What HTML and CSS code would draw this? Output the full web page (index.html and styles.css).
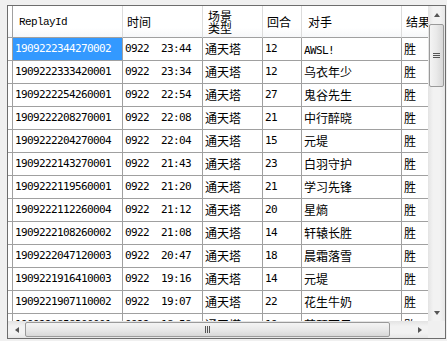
FILE: index.html
```html
<!DOCTYPE html>
<html lang="zh-CN">
<head>
	<meta charset="UTF-8">
	<title>战斗回放</title>
	<link rel="stylesheet" href="styles.css">
</head>
<body>
	<div class="frame">
		<div class="viewport">
			<div class="row head">
				<div class="cell rh"></div>
				<div class="cell id-h">ReplayId</div>
				<div class="cell">时间</div>
				<div class="cell two">场景<br>类型</div>
				<div class="cell">回合</div>
				<div class="cell pad6">对手</div>
				<div class="cell">结果</div>
			</div>
			<div class="row">
				<div class="cell rh"></div>
				<div class="cell num sel">1909222344270002</div>
				<div class="cell num">0922&nbsp;&nbsp;23:44</div>
				<div class="cell">通天塔</div>
				<div class="cell num">12</div>
				<div class="cell"><span class="num">AWSL!</span></div>
				<div class="cell">胜</div>
			</div>
			<div class="row">
				<div class="cell rh"></div>
				<div class="cell num">1909222333420001</div>
				<div class="cell num">0922&nbsp;&nbsp;23:34</div>
				<div class="cell">通天塔</div>
				<div class="cell num">12</div>
				<div class="cell">乌衣年少</div>
				<div class="cell">胜</div>
			</div>
			<div class="row">
				<div class="cell rh"></div>
				<div class="cell num">1909222254260001</div>
				<div class="cell num">0922&nbsp;&nbsp;22:54</div>
				<div class="cell">通天塔</div>
				<div class="cell num">27</div>
				<div class="cell">鬼谷先生</div>
				<div class="cell">胜</div>
			</div>
			<div class="row">
				<div class="cell rh"></div>
				<div class="cell num">1909222208270001</div>
				<div class="cell num">0922&nbsp;&nbsp;22:08</div>
				<div class="cell">通天塔</div>
				<div class="cell num">21</div>
				<div class="cell">中行醉晓</div>
				<div class="cell">胜</div>
			</div>
			<div class="row">
				<div class="cell rh"></div>
				<div class="cell num">1909222204270004</div>
				<div class="cell num">0922&nbsp;&nbsp;22:04</div>
				<div class="cell">通天塔</div>
				<div class="cell num">15</div>
				<div class="cell">元堤</div>
				<div class="cell">胜</div>
			</div>
			<div class="row">
				<div class="cell rh"></div>
				<div class="cell num">1909222143270001</div>
				<div class="cell num">0922&nbsp;&nbsp;21:43</div>
				<div class="cell">通天塔</div>
				<div class="cell num">23</div>
				<div class="cell">白羽守护</div>
				<div class="cell">胜</div>
			</div>
			<div class="row">
				<div class="cell rh"></div>
				<div class="cell num">1909222119560001</div>
				<div class="cell num">0922&nbsp;&nbsp;21:20</div>
				<div class="cell">通天塔</div>
				<div class="cell num">21</div>
				<div class="cell">学习先锋</div>
				<div class="cell">胜</div>
			</div>
			<div class="row">
				<div class="cell rh"></div>
				<div class="cell num">1909222112260004</div>
				<div class="cell num">0922&nbsp;&nbsp;21:12</div>
				<div class="cell">通天塔</div>
				<div class="cell num">20</div>
				<div class="cell">星熵</div>
				<div class="cell">胜</div>
			</div>
			<div class="row">
				<div class="cell rh"></div>
				<div class="cell num">1909222108260002</div>
				<div class="cell num">0922&nbsp;&nbsp;21:08</div>
				<div class="cell">通天塔</div>
				<div class="cell num">14</div>
				<div class="cell">轩辕长胜</div>
				<div class="cell">胜</div>
			</div>
			<div class="row">
				<div class="cell rh"></div>
				<div class="cell num">1909222047120003</div>
				<div class="cell num">0922&nbsp;&nbsp;20:47</div>
				<div class="cell">通天塔</div>
				<div class="cell num">18</div>
				<div class="cell">晨霜落雪</div>
				<div class="cell">胜</div>
			</div>
			<div class="row">
				<div class="cell rh"></div>
				<div class="cell num">1909221916410003</div>
				<div class="cell num">0922&nbsp;&nbsp;19:16</div>
				<div class="cell">通天塔</div>
				<div class="cell num">14</div>
				<div class="cell">元堤</div>
				<div class="cell">胜</div>
			</div>
			<div class="row">
				<div class="cell rh"></div>
				<div class="cell num">1909221907110002</div>
				<div class="cell num">0922&nbsp;&nbsp;19:07</div>
				<div class="cell">通天塔</div>
				<div class="cell num">22</div>
				<div class="cell">花生牛奶</div>
				<div class="cell">胜</div>
			</div>
			<div class="row">
				<div class="cell rh"></div>
				<div class="cell num">1909221858300001</div>
				<div class="cell num">0922&nbsp;&nbsp;18:58</div>
				<div class="cell">通天塔</div>
				<div class="cell num">19</div>
				<div class="cell">萧瑟西风</div>
				<div class="cell">败</div>
			</div>
		</div>
		<!-- 竖向滚动条 -->
		<div class="vscroll">
			<div class="btn"><i class="arr up"></i></div>
			<div class="vthumb"><i class="grip-h"></i></div>
			<div class="track"></div>
			<div class="btn"><i class="arr down"></i></div>
		</div>
		<!-- 横向滚动条 -->
		<div class="hscroll">
			<div class="btn"><i class="arr left"></i></div>
			<div class="hthumb"><i class="grip-v"></i></div>
			<div class="track"></div>
			<div class="btn"><i class="arr right"></i></div>
		</div>
		<div class="corner"></div>
	</div>
</body>
</html>
```

FILE: styles.css
```css
*{margin:0;padding:0;box-sizing:border-box;}
body{
	background:#f0f0f0;
	font-family:"Noto Sans CJK SC",sans-serif;
	font-size:12px;
	color:#000;
}
.frame{
	margin:5px 0 0 7px;
	width:439px;
	height:334px;
	border:1px solid #6d6d6d;
	background:#fff;
	display:grid;
	grid-template-columns:1fr 17px;
	grid-template-rows:1fr 17px;
}
.viewport{
	overflow:hidden;
}
.row{
	display:grid;
	grid-template-columns:5px 110px 80px 60px 39px 100px 60px;
	height:23px;
	width:max-content;
}
.cell{
	border-right:1px solid #a0a0a0;
	border-bottom:1px solid #a0a0a0;
	padding-left:2px;
	line-height:22px;
	white-space:nowrap;
	overflow:hidden;
}
.num{
	font-family:"DejaVu Sans Mono",monospace;
	font-size:11px;
	letter-spacing:-0.62px;
}
.sel{
	background:#3399ff;
	color:#fff;
}
.rh{
	padding:0;
}

/* 表头 */
.head{
	height:32px;
}
.head .cell{
	background:linear-gradient(#fff,#fff 70%,#f6f7f9);
	border-right-color:#dcdcdc;
	border-bottom-color:#a0a0a0;
	padding-left:4px;
	display:flex;
	align-items:center;
	line-height:14px;
}
.head .rh{
	border-right-color:#a0a0a0;
	padding:0;
}
.head .id-h{
	font-family:"Liberation Mono",monospace;
	font-size:11px;
	letter-spacing:-0.6px;
	padding-left:6px;
}
.head .two{
	line-height:12px;
	padding-left:5px;
}
.head .pad6{
	padding-left:6px;
}

/* 滚动条 */
.vscroll,.hscroll{
	display:flex;
	background:#eaeaea;
}
.vscroll{
	flex-direction:column;
	background:linear-gradient(90deg,#e3e3e3,#f2f2f2 30%,#f2f2f2 70%,#e6e6e6);
}
.hscroll{
	background:linear-gradient(#e3e3e3,#f2f2f2 30%,#f2f2f2 70%,#e6e6e6);
}
.btn{
	width:17px;
	height:17px;
	flex:none;
	display:flex;
	align-items:center;
	justify-content:center;
}
.track{
	flex:1;
}
.vthumb,.hthumb{
	border:1px solid #9a9a9a;
	border-radius:2px;
	display:flex;
	align-items:center;
	justify-content:center;
}
.vthumb{
	height:63px;
	margin:1px 1px 0 1px;
	background:linear-gradient(90deg,#f4f4f4,#e9e9e9 50%,#d8d8d8);
}
.hthumb{
	width:365px;
	margin:1px 0 1px 0;
	background:linear-gradient(#f4f4f4,#e9e9e9 50%,#d8d8d8);
}
.grip-h{
	width:7px;
	height:5px;
	background:repeating-linear-gradient(#555 0 1px,transparent 1px 2px);
}
.grip-v{
	width:5px;
	height:7px;
	background:repeating-linear-gradient(90deg,#555 0 1px,transparent 1px 2px);
}
.arr{
	width:0;
	height:0;
	border:3px solid transparent;
}
.arr.up{border-bottom:4px solid #555;border-top:0;}
.arr.down{border-top:4px solid #555;border-bottom:0;}
.arr.left{border-right:4px solid #555;border-left:0;}
.arr.right{border-left:4px solid #555;border-right:0;}
.corner{
	background:#f0f0f0;
}
```
